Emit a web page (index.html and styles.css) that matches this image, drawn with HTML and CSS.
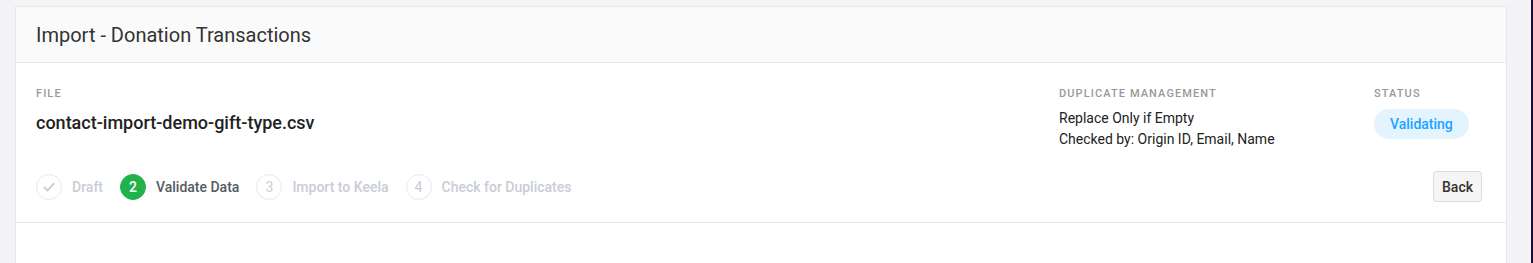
FILE: index.html
```html
<!DOCTYPE html>
<html lang="en">
<head>
<meta charset="utf-8">
<title>Import - Donation Transactions</title>
<link rel="stylesheet" href="styles.css">
</head>
<body>
<div class="frame">
  <main class="page">
    <section class="card">
      <header class="card-header">
        <h1 class="card-title">Import - Donation Transactions</h1>
      </header>
      <div class="card-body">
        <div class="info-row">
          <div class="info-file">
            <div class="label">File</div>
            <div class="file-name">contact-import-demo-gift-type.csv</div>
          </div>
          <div class="info-dup">
            <div class="label">Duplicate Management</div>
            <div class="dup-text">Replace Only if Empty</div>
            <div class="dup-text">Checked by: Origin ID, Email, Name</div>
          </div>
          <div class="info-status">
            <div class="label">Status</div>
            <span class="badge">Validating</span>
          </div>
        </div>
        <div class="steps-row">
          <ol class="steps">
            <li class="step done">
              <span class="step-circle">
                <svg width="14" height="14" viewBox="0 0 14 14"><path d="M2.5 7.5 L5.6 10.4 L11.5 3.8" fill="none" stroke="#c9cdd5" stroke-width="2" stroke-linecap="round" stroke-linejoin="round"/></svg>
              </span>
              <span class="step-label">Draft</span>
            </li>
            <li class="step active">
              <span class="step-circle">2</span>
              <span class="step-label">Validate Data</span>
            </li>
            <li class="step">
              <span class="step-circle">3</span>
              <span class="step-label">Import to Keela</span>
            </li>
            <li class="step">
              <span class="step-circle">4</span>
              <span class="step-label">Check for Duplicates</span>
            </li>
          </ol>
          <button class="btn" type="button">Back</button>
        </div>
      </div>
      <div class="card-rest"></div>
    </section>
  </main>
  <div class="edge"></div>
</div>
</body>
</html>
```
FILE: styles.css
```css
* { box-sizing: border-box; }
html, body { margin: 0; padding: 0; height: 100%; }
body {
  font-family: Roboto, "Noto Sans", "Liberation Sans", sans-serif;
  background: #f4f4f6;
  color: #222;
  overflow: hidden;
}
.frame {
  display: flex;
  height: 263px;
}
.page {
  flex: 1;
  padding: 6px 24px 0 15px;
}
.edge {
  width: 2px;
  background: #1d0b3d;
}
.card {
  background: #fff;
  border: 1px solid #e7e7ec;
  border-bottom: none;
  height: 100%;
}
.card-header {
  background: #fafafa;
  border-bottom: 1px solid #e7e7ec;
  height: 56px;
  padding: 0 20px;
  display: flex;
  align-items: center;
}
.card-title {
  margin: 0;
  font-size: 20px;
  font-weight: 400;
  color: #333;
}
.card-body {
  padding: 23px 20px 20px 20px;
  border-bottom: 1px solid #e7e7ec;
}
.info-row {
  display: flex;
  align-items: flex-start;
}
.info-file { flex: 1; }
.info-dup { width: 315px; }
.info-status { width: 112px; }
.label {
  font-size: 11px;
  line-height: 16px;
  text-transform: uppercase;
  letter-spacing: 1.1px;
  color: #999;
  font-weight: 500;
}
.file-name {
  margin-top: 9px;
  font-size: 18px;
  line-height: 24px;
  font-weight: 500;
  color: #222;
}
.dup-text {
  font-size: 14px;
  line-height: 21px;
  color: #222;
}
.info-dup .label { margin-bottom: 6px; }
.badge {
  display: inline-block;
  margin-top: 7px;
  height: 30px;
  line-height: 30px;
  padding: 0 16px;
  border-radius: 15px;
  background: #e3f4ff;
  color: #1ba3ff;
  font-size: 14px;
  font-weight: 500;
}
.steps-row {
  display: flex;
  align-items: center;
  justify-content: space-between;
  margin-top: 21px;
  padding-right: 4px;
}
.steps {
  list-style: none;
  margin: 0;
  padding: 0;
  display: flex;
  align-items: center;
  gap: 17px;
}
.step {
  display: flex;
  align-items: center;
  gap: 10px;
  font-size: 14px;
  color: #c9cdd5;
}
.step-circle {
  width: 26px;
  height: 26px;
  border-radius: 50%;
  border: 1px solid #e8e9ed;
  display: flex;
  align-items: center;
  justify-content: center;
  font-size: 14px;
  color: #c9cdd5;
}
.step.active .step-circle {
  background: #21b24b;
  border-color: #21b24b;
  color: #fff;
  font-weight: 500;
}
.step.active .step-label { color: #555a63; }
.step-label { font-weight: 500; }
.btn {
  font-family: inherit;
  font-size: 14px;
  font-weight: 500;
  color: #333;
  background: #f5f5f5;
  border: 1px solid #dcdcdc;
  border-radius: 3px;
  height: 31px;
  padding: 0 8px;
  cursor: pointer;
}
```
